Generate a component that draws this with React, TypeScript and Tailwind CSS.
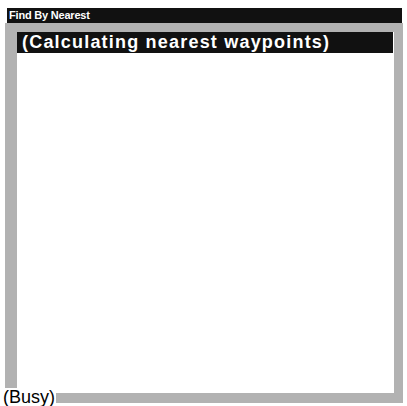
import React from 'react';

const App: React.FC = () => {
  return (
    <div className="relative w-[407px] h-[406px] overflow-hidden bg-white font-['Liberation_Sans',Arial,sans-serif] text-black">
      {/* Window title */}
      <div className="pt-[8px] pl-[7px] pr-[5px]">
        <div className="h-[15px] bg-[#111111] pl-[2px] text-[11px] font-bold leading-[15px] text-white tracking-[-0.2px]">
          Find By Nearest
        </div>
      </div>

      {/* List frame */}
      <div className="ml-[5px] mr-[4px] h-[380px] bg-[#b2b2b2] pt-[9px] pb-[10px] pl-[12px] pr-[9px]">
        <div className="h-full bg-white">
          <div className="mr-[1px] h-[21px] bg-[#111111] pl-[5px] text-[18px] font-bold leading-[21px] text-white tracking-[1.2px]">
            (Calculating nearest waypoints)
          </div>
        </div>
      </div>

      {/* Status */}
      <span className="absolute left-[3px] bottom-0 bg-white pr-[1px] text-[18px] leading-[18px]">(Busy)</span>
    </div>
  );
};

export default App;
